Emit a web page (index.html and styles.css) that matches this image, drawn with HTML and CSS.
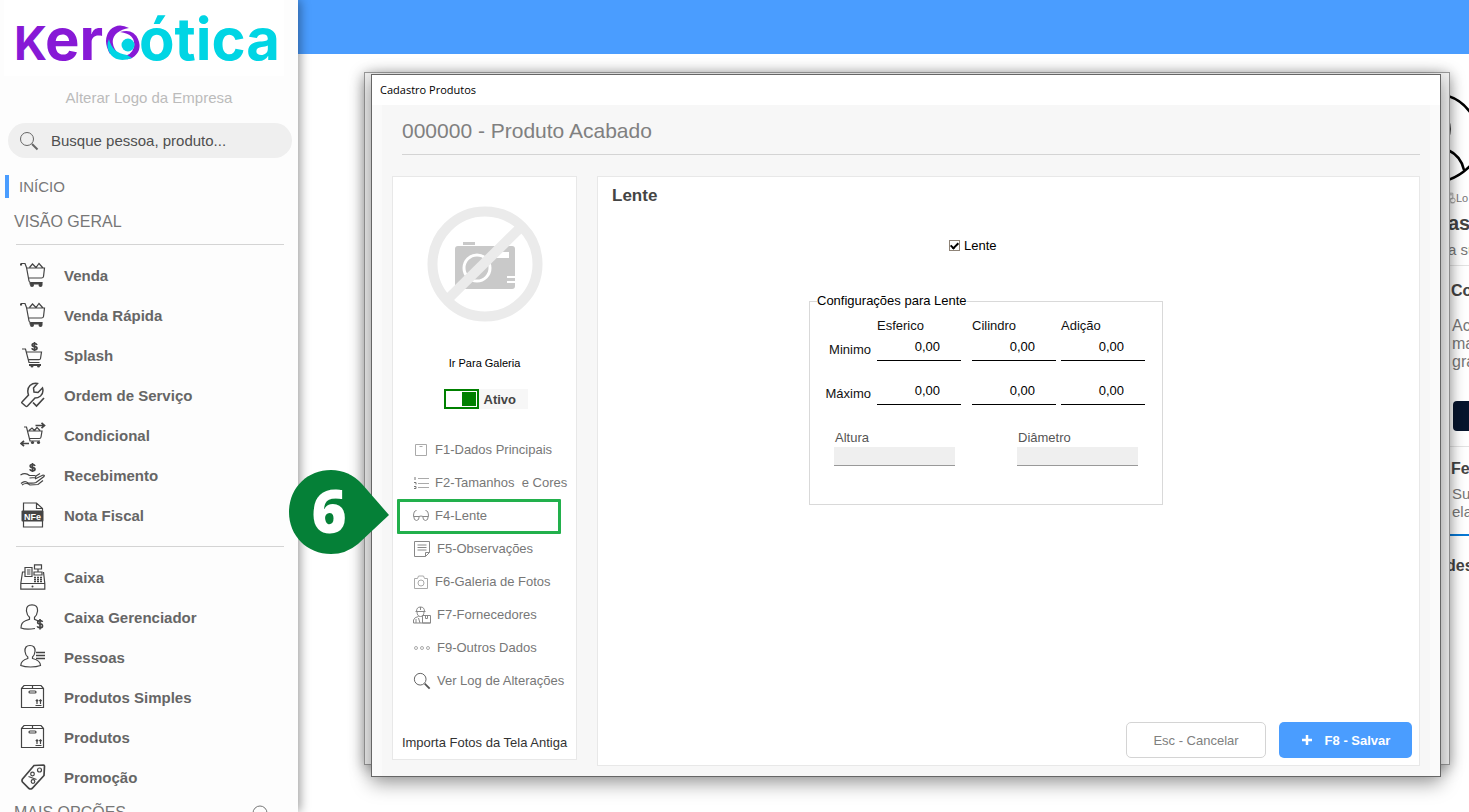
FILE: index.html
```
<!DOCTYPE html>
<html lang="pt-BR">
<head>
<meta charset="UTF-8">
<meta name="viewport" content="width=device-width, initial-scale=1.0">
<title>Cadastro Produtos</title>
<link rel="stylesheet" href="styles.css">
</head>
<body>
    <svg class="symbols" aria-hidden="true">
        <symbol id="cart" viewBox="0 0 26 26">
            <path d="M0.500 1.500v1.500h1v-1.500h3.500l1.500 4 2.500 13.500q.3 1.500 2 1.500h11.500M6.500 6h18l-1 8.500q-.2 1.500-2 1.500H8.500M9.500 5.500l3-3.500 3.500 3.500 3-4 4 4.500"/>
            <rect class="fill" x="9.500" y="20.500" width="13" height="2"/>
            <circle class="fill" cx="12" cy="23" r="2"/><circle class="fill" cx="20.500" cy="23" r="2"/>
        </symbol>
        <symbol id="box" viewBox="0 0 26 26">
            <path d="M1.500 4.500h22v19h-22zM1.500 4.500l2.500-3h17l2.500 3M12.500 1.500v3M15.500 21.500h6M17 20v-4M20.500 20v-4M15.800 17l1.200-1.200 1.200 1.200M19.300 17l1.200-1.200 1.200 1.200"/>
            <rect x="9" y="7" width="7" height="2" rx="1"/>
        </symbol>
        <symbol id="search" viewBox="0 0 20 20">
            <circle cx="8" cy="8" r="6.500"/>
            <path class="handle" d="M13 13l5.500 5.500"/>
        </symbol>
    </svg>

    <aside class="sidebar">
        <div class="logo">
            <svg viewBox="0 0 280 76" role="img" aria-label="kero ótica">
                <text class="purple" x="10" y="60" font-size="46">K</text>
                <text class="purple" x="41" y="60" font-size="58">er</text>
                <path class="purple" d="M125 28q-11-6-19 2-8 10 0 24l6-3q-7-11 1-18 5-4 12-5z"/>
                <path class="purple" d="M116 32q13-4 18 7 5 12-6 19-6 3-12-2 11 1 14-9 2-13-14-15z"/>
                <path class="cyan" d="M105 39q3 14 18 16l5 3q-14 5-21-3-6-8-2-16z"/>
                <circle class="cyan" cx="124" cy="45" r="6.500"/>
                <text class="cyan" x="135" y="60" font-size="58">ótica</text>
            </svg>
        </div>
        <a class="change-logo" href="#">Alterar Logo da Empresa</a>
        <div class="search">
            <svg class="icon"><use href="#search"/></svg>
            <input type="text" aria-label="Buscar" placeholder="Busque pessoa, produto...">
        </div>
        <a class="section active" href="#">INÍCIO</a>
        <a class="section" href="#">VISÃO GERAL</a>
        <hr>
        <ul class="menu">
            <li><a href="#"><svg class="icon"><use href="#cart"/></svg>Venda</a></li>
            <li><a href="#"><svg class="icon"><use href="#cart"/></svg>Venda Rápida</a></li>
            <li><a href="#">
                <svg class="icon" viewBox="0 0 26 26">
                    <path d="M2 7h3.500l3.500 13.500h10.500M6 10h15.500l-1 6.500q-.2 1.200-1.500 1.200H8"/>
                    <path class="heavy" d="M17 3q-.5-1.500-2.500-1.500-2.300 0-2.300 1.500t2.400 1.600 2.400 1.700q0 1.500-2.500 1.500-2.300 0-2.700-1.500M14.500 0v9"/>
                    <rect class="fill" x="9" y="22" width="12" height="2"/>
                    <circle class="fill" cx="12" cy="24" r="1.500"/><circle class="fill" cx="18.500" cy="24" r="1.500"/>
                </svg>Splash</a></li>
            <li><a href="#">
                <svg class="icon" viewBox="0 0 26 26">
                    <path class="tool" d="M2 20l6.500-7q-2-6 1.500-9.500 3.500-3 7.500-2l-4 4.500.5 4 4 .5 4.500-4.500q1.500 5-2 8-2.500 2-5.500 2l-7.500 8q-1 .8-2 0l-3.500-3q-.5-.5 0-1z"/>
                    <path class="heavy" d="M13 20.500l3.500 3.500 7.500-8"/>
                </svg>Ordem de Serviço</a></li>
            <li><a href="#">
                <svg class="icon" viewBox="0 0 26 26">
                    <path d="M4 5h2.500l3.500 14h10M7 9h15l-1 6q-.2 1.500-1.500 1.500H9M9 8.500l3-2.500 2.500 2.500 2.500-3 3 3"/>
                    <path class="heavy" d="M15.500 3.500h9M21.500.8l3 2.700-3 2.700M9 21.500H.8M4 18.800l-3 2.700 3 2.700"/>
                    <circle class="fill" cx="12.500" cy="20.500" r="1.600"/><circle class="fill" cx="18.500" cy="20.500" r="1.600"/>
                </svg>Condicional</a></li>
            <li><a href="#">
                <svg class="icon" viewBox="0 0 26 26">
                    <path class="heavy" d="M15 4q-.5-1.500-2.500-1.500-2.300 0-2.300 1.500t2.400 1.600 2.400 1.700q0 1.500-2.500 1.500-2.300 0-2.700-1.500M12.500 1v9"/>
                    <path d="M.5 13q5-3 9 .5h5q2 .5 1 2l-6 .5M15 17l8-4q2 0 1 1.500l-8 6q-2 1-8 .5-3-3-7 .5M16 14l4-2.500M2 23q4-3 8 0l8-.5 5-4"/>
                </svg>Recebimento</a></li>
            <li><a href="#">
                <svg class="icon" viewBox="0 0 26 26">
                    <path d="M3.500 9V1h13l6 5.500V9M3.500 19v6h19v-6M16.500 1v5.500h6"/>
                    <rect class="fill" x="1.500" y="8.500" width="22" height="11" rx="1"/>
                    <text class="nfe" x="12.500" y="17.500">NFe</text>
                </svg>Nota Fiscal</a></li>
        </ul>
        <hr>
        <ul class="menu">
            <li><a href="#">
                <svg class="icon" viewBox="0 0 26 26">
                    <path d="M4.500 8H2.500L.8 19.500v5.700h24v-5.700L23.500 8M.8 19.500h24M6 3.500h6v9H5v-9zM7 6h3.500M7 8h3.500M7 10h3.500M14.500.8h7V5h-7zM18 5v3M14 8h8v3h-8zM4.500 8h1"/>
                    <path class="keys" d="M14 13.500h9M14 15.500h9M14 17.500h9"/>
                    <circle class="fill" cx="12.500" cy="22.500" r="1"/>
                </svg>Caixa</a></li>
            <li><a href="#">
                <svg class="icon" viewBox="0 0 26 26">
                    <path d="M12 .8q6 0 5.500 6.500-.5 4-3 6v2l4.500 2M12 .8q-6 0-5.500 6.500.5 4 3 6v2l-4 1.500Q1 18.500 1 24q5 2 14 .5"/>
                    <path class="heavy" d="M22.500 18q-.5-1.500-2.500-1.500-2.300 0-2.300 1.800t2.400 1.600 2.400 2q0 1.800-2.500 1.800-2.300 0-2.700-1.500M20 15v10.500"/>
                </svg>Caixa Gerenciador</a></li>
            <li><a href="#">
                <svg class="icon" viewBox="0 0 26 26">
                    <path d="M10 1.500q5.500 0 5 6-.5 4-2.500 5.500v1.500q8 2 8 7-4 1.500-10 1.500T.8 21.500q0-5 7-7V13Q5.500 11.500 5 7.500q-.5-6 5-6z"/>
                    <path class="heavy" d="M16 8.500h9M16 11.500h9M16 14.500h9"/>
                </svg>Pessoas</a></li>
            <li><a href="#"><svg class="icon"><use href="#box"/></svg>Produtos Simples</a></li>
            <li><a href="#"><svg class="icon"><use href="#box"/></svg>Produtos</a></li>
            <li><a href="#">
                <svg class="icon" viewBox="0 0 26 26">
                    <path class="heavy" d="M14 1.500l9.500-.5q1 0 1 1l-.5 9.500L12 24.500q-1.500 1-3 0l-6.500-6.500q-1-1.500 0-3z"/>
                    <circle cx="19.500" cy="6" r="2"/><circle cx="12.500" cy="10" r="1.800"/><circle cx="13" cy="17.500" r="1.800"/>
                    <path d="M8.500 12.500l8 3"/>
                </svg>Promoção</a></li>
        </ul>
        <a class="section more" href="#">MAIS OPÇÕES
            <svg class="icon" viewBox="0 0 16 16"><circle cx="8" cy="8" r="7"/><path d="M5 7l3 3 3-3"/></svg>
        </a>
    </aside>

    <main class="desktop">
        <header class="topbar"></header>
        <section class="account">
            <svg class="avatar" viewBox="0 0 28 90">
                <path d="M0 2q13 4 22 16M0 86q12-4 22-14M0 56q13 6 16 20"/>
                <path d="M0 26q3 9 0 18"/>
            </svg>
            <p class="tiny">
                <svg viewBox="0 0 10 14"><path d="M1 1h5v7H1zM2 3h3M2 13V9M3 13h5"/><circle cx="6" cy="10" r="3"/></svg>Lo</p>
            <h2>as</h2>
            <p class="sub">a su</p>
            <h3>Co</h3>
            <p>Ac<br>ma<br>gra</p>
            <div class="dark"></div>
            <h3 class="ruled">Fe</h3>
            <p class="note">Su<br>ela</p>
            <h3 class="next">des</h3>
        </section>
    </main>

    <div class="window back"></div>
    <section class="window front">
        <div class="titlebar">Cadastro Produtos</div>
        <div class="window-body">
            <h1>000000 - Produto Acabado</h1>
            <div class="columns">
                <nav class="card tabs">
                    <svg class="no-photo" viewBox="0 0 116 116">
                        <rect class="grey" x="36" y="36" width="12" height="3"/>
                        <rect class="grey" x="28" y="40" width="60" height="43" rx="3"/>
                        <rect class="white" x="64" y="46" width="18" height="6"/>
                        <rect class="white" x="80" y="70" width="8" height="2"/>
                        <rect class="white" x="80" y="75" width="8" height="2"/>
                        <circle class="lens" cx="50" cy="62" r="13"/>
                        <path class="ban" d="M92 23L22 92"/>
                        <circle class="ban" cx="58" cy="58" r="52.500"/>
                    </svg>
                    <a class="gallery" href="#">Ir Para Galeria</a>
                    <label class="toggle"><input type="checkbox" checked>Ativo</label>
                    <ul>
                        <li><a href="#"><svg class="small" viewBox="0 0 16 16"><path d="M2.500 2.500h11v11h-11zM6.500 4.500h3"/></svg>F1-Dados Principais</a></li>
                        <li><a href="#"><svg class="small" viewBox="0 0 16 16"><path d="M5 3.500h11M5 8.500h11M5 12.500h11"/><path class="numbers" d="M2 2v3M1 7.500h2v2M1 11.500h2v2H1"/></svg>F2-Tamanhos &nbsp;e Cores</a></li>
                        <li class="marked">
                            <a href="#"><svg class="small" viewBox="0 0 16 16"><path d="M.5 8.500q0-6 3-6M15.500 8.500q0-6-3-6M.5 8.500h5.500q2-1 4 0h5.500"/><path d="M.8 8.500q0 4 2.700 4t2.700-4M9.800 8.500q0 4 2.700 4t2.700-4"/></svg>F4-Lente</a>
                            <div class="callout">
                                <svg viewBox="0 0 100 84"><path d="M42 0C18 0 0 18 0 42s18 42 42 42q15 0 27-10l31-29-27-31Q60 0 42 0z"/></svg>
                                <span>6</span>
                            </div>
                        </li>
                        <li><a href="#"><svg viewBox="0 0 18 18"><path class="dark-line" d="M1.500 1.500h15v11l-4 4h-11zM16.500 12.500h-4v4M4.500 5h9M4.500 7.500h9M4.500 10h9"/></svg>F5-Observações</a></li>
                        <li><a href="#"><svg class="small" viewBox="0 0 16 16"><path d="M1.500 4.500h3l1-2.500h5l1 2.500h3v10h-13z"/><circle cx="8" cy="9" r="3"/></svg>F6-Galeria de Fotos</a></li>
                        <li><a href="#"><svg viewBox="0 0 18 18"><path class="dark-line" d="M3.500 5.500q0-4.500 4-4.500t4 4.500M2.500 5.500h10M4 5.500q0 5 3.500 5t3.500-5M7.500 1v3M.5 17v-3q1-3 5-3.500M.5 17h17M9.500 9.500h8V17h-8zM12.500 9.500v3h2v-3M3 13v4M5.500 12l1.500 5"/></svg>F7-Fornecedores</a></li>
                        <li><a href="#"><svg viewBox="0 0 18 18"><circle cx="3" cy="9" r="1.500"/><circle cx="9" cy="9" r="1.500"/><circle cx="15" cy="9" r="1.500"/></svg>F9-Outros Dados</a></li>
                        <li><a href="#"><svg class="search-icon"><use href="#search"/></svg>Ver Log de Alterações</a></li>
                    </ul>
                    <a class="import" href="#">Importa Fotos da Tela Antiga</a>
                </nav>
                <form class="card content">
                    <h2>Lente</h2>
                    <div class="lens-form">
                        <label class="check"><input type="checkbox" checked>Lente</label>
                        <fieldset>
                            <legend>Configurações para Lente</legend>
                            <div class="grid">
                                <span></span>
                                <span id="esf">Esferico</span>
                                <span id="cil">Cilindro</span>
                                <span id="adi">Adição</span>
                                <span class="row-name" id="min">Minimo</span>
                                <input type="text" value="0,00" aria-labelledby="min esf">
                                <input type="text" value="0,00" aria-labelledby="min cil">
                                <input type="text" value="0,00" aria-labelledby="min adi">
                                <span class="row-name" id="max">Máximo</span>
                                <input type="text" value="0,00" aria-labelledby="max esf">
                                <input type="text" value="0,00" aria-labelledby="max cil">
                                <input type="text" value="0,00" aria-labelledby="max adi">
                            </div>
                            <div class="sizes">
                                <div>
                                    <label for="altura">Altura</label>
                                    <input type="text" id="altura" disabled>
                                </div>
                                <div>
                                    <label for="diametro">Diâmetro</label>
                                    <input type="text" id="diametro" disabled>
                                </div>
                            </div>
                        </fieldset>
                    </div>
                    <div class="actions">
                        <button type="button" class="cancel">Esc - Cancelar</button>
                        <button type="button" class="save"><svg viewBox="0 0 12 12"><path d="M6 1v10M1 6h10"/></svg>F8 - Salvar</button>
                    </div>
                </form>
            </div>
        </div>
    </section>
</body>
</html>
```
FILE: styles.css
```
* {
    box-sizing: border-box;
}

body {
    margin: 0;
    height: 100vh;
    display: flex;
    position: relative;
    overflow: hidden;
    background: #fff;
    color: #111;
    font-family: "Liberation Sans", Arial, sans-serif;
    font-size: 13px;
}

h1, h2, h3, p, ul {
    margin: 0;
    padding: 0;
    font-weight: normal;
    list-style: none;
}

a {
    color: inherit;
    text-decoration: none;
}

svg {
    fill: none;
    stroke: #444;
    flex-shrink: 0;
}

input, button {
    font-family: inherit;
    font-size: 13px;
}

.symbols {
    position: absolute;
    width: 0;
    height: 0;
}

/* sidebar */
.sidebar {
    position: relative;
    z-index: 1;
    width: 298px;
    flex-shrink: 0;
    display: flex;
    flex-direction: column;
    background: #fdfdfd;
    box-shadow: 2px 0 10px rgba(0, 0, 0, 0.4);
    clip-path: inset(0 -14px 0 0);
}

.sidebar > * {
    flex-shrink: 0;
}

.logo {
    height: 76px;
    margin: 0 14px 0 4px;
    background: #fff;
}

.logo svg {
    display: block;
    height: 76px;
    font-family: Inter, sans-serif;
    font-weight: 700;
    stroke: none;
    overflow: visible;
}

.purple {
    fill: #8719d6;
}

.cyan {
    fill: #00d5e4;
}

.change-logo {
    margin-top: 12px;
    line-height: 20px;
    font-size: 15px;
    text-align: center;
    color: #bbb;
}

.search {
    display: flex;
    align-items: center;
    gap: 12px;
    height: 35px;
    margin: 15px 6px 0 8px;
    padding: 0 11px;
    border-radius: 18px;
    background: #efefef;
}

.search .icon {
    width: 20px;
    height: 20px;
    stroke: #666;
}

.search input {
    flex: 1;
    min-width: 0;
    padding: 0;
    border: 0;
    background: none;
    font-size: 15px;
}

.search input::placeholder {
    color: #505050;
    opacity: 1;
}

.handle {
    stroke-width: 2;
}

.section {
    margin: 12px 14px 0;
    line-height: 23px;
    font-size: 16px;
    color: #777;
}

.section.active {
    margin: 17px 5px 0;
    padding-left: 10px;
    border-left: 4px solid #4a9dff;
    font-size: 15px;
}

.section.more {
    display: flex;
    justify-content: space-between;
    margin: 4px 30px 0 14px;
}

.more .icon {
    width: 16px;
    height: 16px;
    margin-top: 4px;
    stroke: #777;
}

.sidebar hr {
    width: 268px;
    margin: 11px 0 10px 16px;
    border: 0;
    border-top: 1px solid #d4d4d4;
}

.menu a {
    display: flex;
    align-items: center;
    gap: 18px;
    height: 40px;
    padding-left: 20px;
    font-size: 15px;
    font-weight: bold;
    color: #666;
}

.menu .icon {
    width: 26px;
    height: 26px;
    stroke-width: 1.2;
}

.fill {
    fill: #444;
    stroke: none;
}

.heavy {
    stroke-width: 1.7;
}

.tool {
    stroke-width: 1.5;
}

.keys {
    stroke-width: 1.5;
    stroke-dasharray: 2 1;
}

.nfe {
    fill: #fff;
    stroke: none;
    font-size: 9px;
    text-anchor: middle;
}

/* area behind the window */
.desktop {
    flex: 1;
    min-width: 0;
}

.topbar {
    height: 54px;
    background: #4a9dff;
}

.account {
    width: 28px;
    margin: 40px -7px 0 auto;
    color: #777;
    font-size: 16px;
    line-height: 18px;
    white-space: nowrap;
}

.account h2, .account h3 {
    color: #444;
    font-weight: bold;
}

.account h2 {
    font-size: 20px;
    line-height: 30px;
}

.account h3 {
    margin: 6px 0 17px -2px;
    padding: 16px 0 0 5px;
    border-top: 1px solid #e3e3e3;
    font-size: 16px;
}

.account p {
    padding-left: 4px;
}

.avatar {
    display: block;
    width: 28px;
    height: 90px;
    stroke: #000;
    stroke-width: 2.5;
}

.account .tiny {
    display: flex;
    align-items: center;
    padding: 0;
    margin-top: 4px;
    height: 20px;
    font-size: 11px;
}

.tiny svg {
    width: 8px;
    height: 14px;
    stroke: #999;
}

.account .sub {
    padding: 0;
    margin-top: 3px;
    font-size: 15px;
}

.account .dark {
    height: 30px;
    margin: 30px 0 0 5px;
    border-radius: 4px;
    background: #07152d;
}

.account .ruled {
    margin-top: 15px;
    margin-bottom: 7px;
    padding-top: 13px;
}

.account .note {
    font-size: 15px;
}

.account .next {
    border-top: 2px solid #0878d4;
    margin-top: 13px;
    padding: 21px 0 0;
}

/* windows */
.window {
    position: absolute;
    z-index: 2;
    background: #f7f7f7;
    border: 1px solid #666;
}

.window.back {
    top: 72px;
    right: 19px;
    bottom: 47px;
    left: 364px;
    border-color: #999;
    background: #f2f2f2;
    box-shadow: 0 3px 14px rgba(0, 0, 0, 0.4);
}

.window.front {
    top: 74px;
    right: 28px;
    bottom: 35px;
    left: 371px;
    display: flex;
    flex-direction: column;
    box-shadow: 0 6px 18px rgba(0, 0, 0, 0.4);
}

.titlebar {
    height: 30px;
    padding-left: 8px;
    line-height: 30px;
    background: #fff;
    color: #000;
    font-family: "Open Sans", sans-serif;
    font-size: 11px;
}

.window-body {
    flex: 1;
    display: flex;
    flex-direction: column;
    padding: 0 10px 10px;
    border: solid #fafafa;
    border-width: 0 10px;
}

.window-body h1 {
    height: 50px;
    margin-left: 10px;
    line-height: 52px;
    border-bottom: 1px solid #d4d4d4;
    font-size: 21px;
    color: #808080;
}

.columns {
    flex: 1;
    display: flex;
    gap: 20px;
    margin-top: 21px;
}

.card {
    background: #fff;
    border: 1px solid #e8e8e8;
}

.tabs {
    width: 185px;
    margin-bottom: 6px;
    display: flex;
    flex-direction: column;
    align-items: center;
}

.no-photo {
    width: 116px;
    height: 116px;
    margin-top: 29px;
    stroke: none;
}

.grey {
    fill: #c9c9c9;
}

.white {
    fill: #fff;
}

.lens {
    stroke: #fff;
    stroke-width: 3;
}

.ban {
    stroke: #ebebeb;
    stroke-width: 10;
}

.gallery {
    margin-top: 34px;
    line-height: 14px;
    font-size: 11px;
    color: #000;
}

.toggle {
    display: flex;
    align-items: center;
    gap: 5px;
    width: 84px;
    height: 20px;
    margin: 19px 0 24px 2px;
    background: #f7f7f7;
    font-weight: bold;
    color: #444;
}

.toggle input {
    appearance: none;
    width: 35px;
    height: 20px;
    margin: 0;
    border: 2px solid #008000;
    background: #fff;
}

.toggle input:checked {
    background: linear-gradient(#008000, #008000) right 1px center / 14px 14px no-repeat #fff;
}

.tabs ul {
    width: 100%;
}

.tabs li {
    position: relative;
}

.tabs li a {
    display: flex;
    align-items: center;
    gap: 6px;
    height: 33px;
    padding-left: 20px;
    color: #777;
    white-space: nowrap;
}

.tabs li svg {
    width: 18px;
    height: 18px;
    stroke: #aaa;
}

.tabs li .small {
    width: 16px;
    height: 16px;
}

.tabs li .dark-line, .tabs .marked .small {
    stroke: #888;
}

.tabs .numbers {
    stroke: #777;
}

.tabs li .search-icon {
    stroke: #555;
}

.marked::after {
    content: "";
    position: absolute;
    top: 0;
    right: 15px;
    bottom: -2px;
    left: 4px;
    border: 3px solid #22b04c;
    border-radius: 1px;
}

.callout {
    position: absolute;
    top: -29px;
    left: -104px;
    width: 100px;
    height: 84px;
}

.tabs .callout svg {
    position: absolute;
    width: 100px;
    height: 84px;
    fill: #058037;
    stroke: none;
}

.callout span {
    position: absolute;
    width: 80px;
    line-height: 80px;
    text-align: center;
    color: #fff;
    font-family: "Open Sans", sans-serif;
    font-size: 60px;
    font-weight: 800;
}

.import {
    margin: auto 0 8px;
    line-height: 16px;
    color: #333;
}

.content {
    flex: 1;
    display: flex;
    flex-direction: column;
    padding: 0 7px 7px 14px;
}

.content h2 {
    margin-top: 9px;
    line-height: 20px;
    font-size: 17px;
    font-weight: bold;
    color: #444;
}

.lens-form {
    width: 354px;
    margin: 28px auto 0;
    position: relative;
    right: 26px;
}

.check {
    display: flex;
    align-items: center;
    gap: 4px;
    height: 22px;
    margin-left: 140px;
    color: #000;
}

.check input {
    appearance: none;
    width: 11px;
    height: 11px;
    margin: 0;
    border: 1px solid #8f8478;
    background: #fff;
    display: grid;
    place-items: center;
}

.check input:checked::before {
    content: "";
    width: 3px;
    height: 6px;
    border: solid #000;
    border-width: 0 2px 2px 0;
    transform: rotate(45deg);
}

fieldset {
    height: 213px;
    margin: 36px 0 0;
    padding: 8px 0 0;
    border: 1px solid #d9d9d9;
}

legend {
    margin-left: 7px;
    padding: 0;
    line-height: 18px;
    color: #000;
}

.grid {
    display: grid;
    grid-template-columns: 67px 95px 89px 84px;
    grid-template-rows: 16px 27px 44px;
    color: #111;
}

.grid span {
    line-height: 16px;
}

.grid .row-name {
    align-self: end;
    padding-right: 6px;
    margin-bottom: 3px;
    text-align: right;
}

.grid input {
    align-self: end;
    width: 84px;
    height: 26px;
    padding: 0 21px 2px 0;
    border: 0;
    border-bottom: 1px solid #000;
    background: none;
    color: #000;
    text-align: right;
}

.sizes {
    display: flex;
    gap: 62px;
    margin: 24px 24px 0;
    color: #555;
}

.sizes label {
    display: block;
    line-height: 18px;
    padding-left: 1px;
}

.sizes input {
    display: block;
    width: 121px;
    height: 19px;
    border: 0;
    border-bottom: 1px solid #999;
    background: #efefef;
}

.actions {
    display: flex;
    justify-content: flex-end;
    gap: 13px;
    margin-top: auto;
}

.actions button {
    height: 36px;
    border-radius: 5px;
}

.actions .cancel {
    width: 140px;
    border: 1px solid #d4d4d4;
    background: #fff;
    color: #808080;
}

.actions .save {
    display: flex;
    align-items: center;
    justify-content: center;
    gap: 12px;
    width: 133px;
    border: 0;
    background: #4a9dff;
    color: #fff;
    font-weight: bold;
}

.save svg {
    width: 12px;
    height: 12px;
    stroke: #fff;
    stroke-width: 2.5;
}
```
